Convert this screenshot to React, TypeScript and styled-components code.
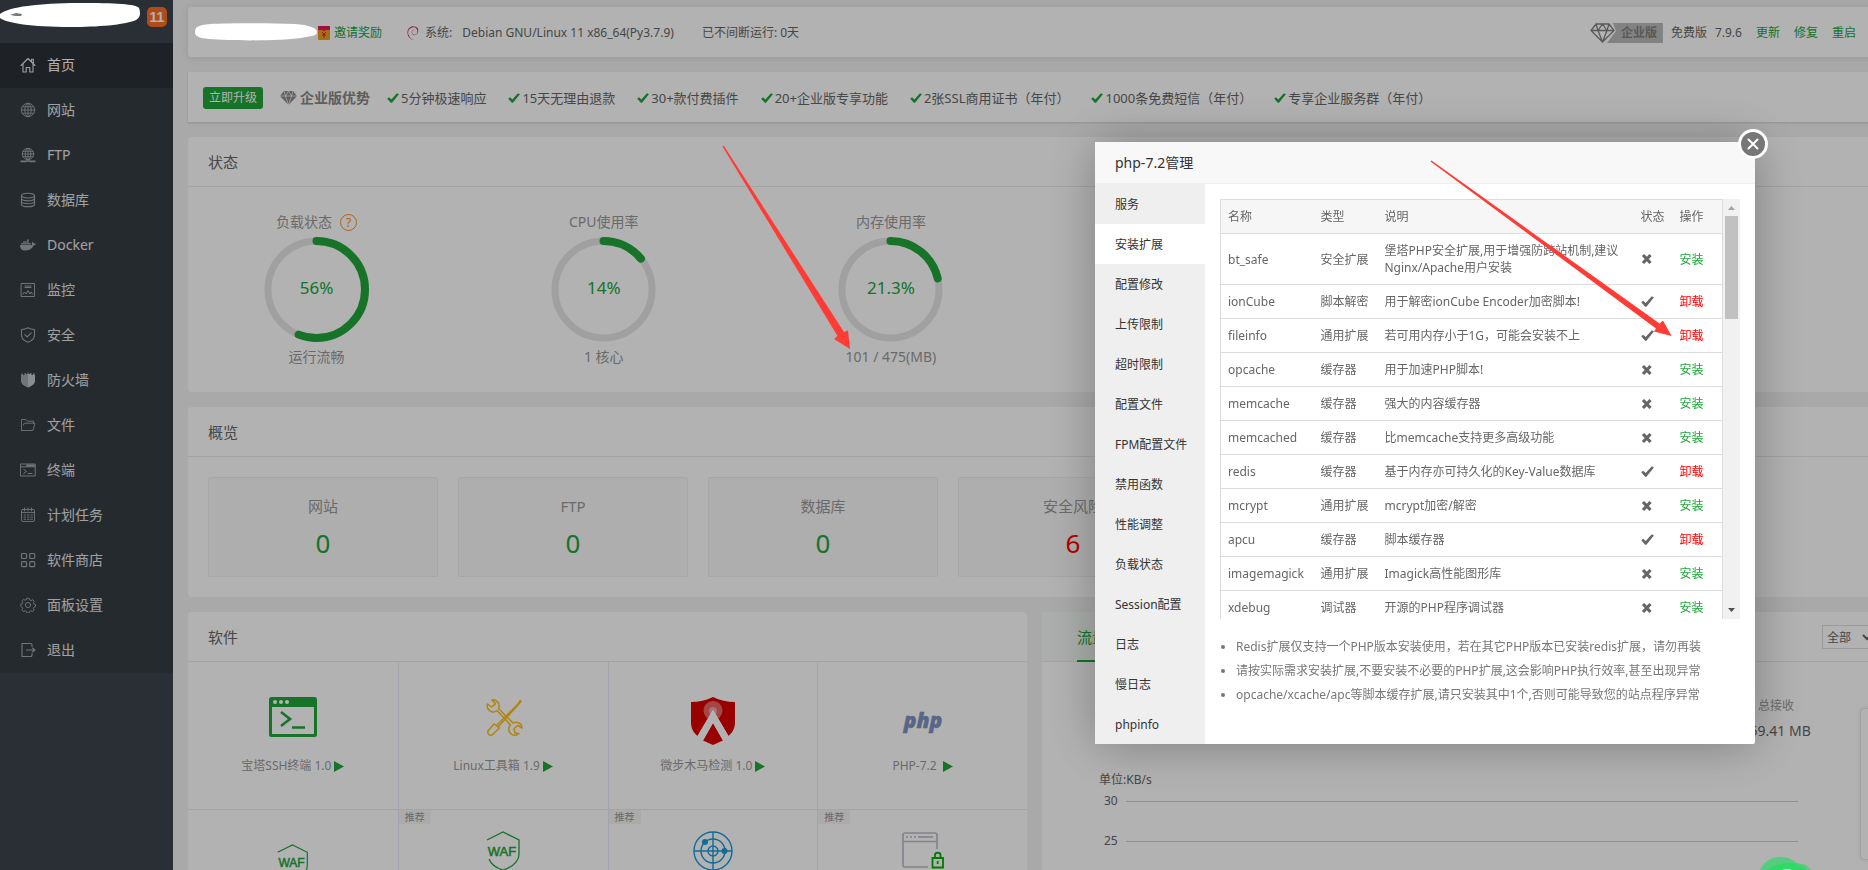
import React from "react";
import styled, { createGlobalStyle } from "styled-components";
import { FaDocker } from "react-icons/fa";
import { SiDebian } from "react-icons/si";

const GlobalStyle = createGlobalStyle`
  *, *::before, *::after { box-sizing: border-box; }
  body {
    margin: 0;
    overflow: hidden;
    background: #f2f2f2;
    color: #666;
    font: 12px/18px "Noto Sans", "Noto Sans CJK SC", sans-serif;
  }
  a { color: inherit; text-decoration: none; }
  button { font: inherit; color: inherit; border: 0; background: none; padding: 0; cursor: pointer; }
  ul, h2, h3, p { margin: 0; padding: 0; font-weight: normal; }
  svg { display: block; flex: none; }
`;

const green = "#20a53a";

/* ---------- shell ---------- */

const Shell = styled.div`
  display: flex;
  width: calc(100% + 28px);
  height: 100vh;
  overflow: hidden;
`;

const Sidebar = styled.aside`
  flex: none;
  width: 173px;
  background: #3c444d;
`;

const SidebarTop = styled.div`
  display: flex;
  justify-content: flex-end;
  height: 43px;
  padding: 7px 6px 0 0;
`;

const MessageBadge = styled.span`
  width: 20px;
  height: 20px;
  border-radius: 5px;
  background: #fc6d26;
  color: #fff;
  font: bold 14px/20px "Liberation Sans", sans-serif;
  text-align: center;
`;

const Menu = styled.ul`
  list-style: none;
  background: #353d44;
`;

const MenuLink = styled.a<{ $active?: boolean }>`
  display: flex;
  align-items: center;
  gap: 11px;
  height: 45px;
  padding: 0 0 2px 20px;
  font-size: 14px;
  color: ${(p) => (p.$active ? "#fff" : "#e6e6e6")};
  background: ${(p) => (p.$active ? "#2c3138" : "transparent")};
  svg { color: ${(p) => (p.$active ? "#e6e6e6" : "#a4a8ac")}; }
`;

const Main = styled.main`
  flex: 1;
  min-width: 0;
  display: flex;
  flex-direction: column;
  gap: 15px;
  padding: 7px 15px 0;
`;

/* ---------- top bars ---------- */

const TopBar = styled.header`
  flex: none;
  display: flex;
  align-items: center;
  height: 50px;
  padding: 2px 25px 0 7px;
  border-radius: 4px;
  background: #fff;
  box-shadow: 0 1px 8px rgba(0, 0, 0, 0.1);
`;

const TopGroup = styled.div<{ $gap: number; $before?: number }>`
  display: flex;
  align-items: center;
  gap: ${(p) => p.$gap}px;
  margin-left: ${(p) => p.$before ?? 0}px;
`;

const TopRight = styled.div`
  display: flex;
  align-items: center;
  gap: 14px;
  margin-left: auto;
`;

const EditionBadge = styled.span`
  display: flex;
  align-items: center;
  color: #808080;
`;

const EditionLabel = styled.span`
  width: 56px;
  height: 20px;
  margin-left: -8px;
  padding-left: 14px;
  clip-path: polygon(6px 0, 100% 0, 100% 100%, 0 100%, 9px 8px);
  background: #bbb;
  color: #808080;
  font-weight: bold;
  line-height: 20px;
`;

const GreenLink = styled.a`
  color: ${green};
`;

const PromoBar = styled.section`
  flex: none;
  display: flex;
  align-items: center;
  gap: 17px;
  height: 50px;
  padding: 1px 0 0 15px;
  background: #fff;
  box-shadow: 0 1px 2px rgba(0, 0, 0, 0.15);
  font-size: 13px;
`;

const UpgradeButton = styled.button`
  width: 60px;
  height: 22px;
  border-radius: 3px;
  background: ${green};
  color: #fff;
  font-size: 12px;
  line-height: 22px;
`;

const PromoTitle = styled.strong`
  display: flex;
  align-items: center;
  gap: 3px;
  font-size: 14px;
  color: #888;
`;

const PromoList = styled.div`
  display: flex;
  gap: 22px;
`;

const PromoItem = styled.span`
  display: flex;
  align-items: center;
  gap: 2px;
  white-space: nowrap;
  svg { color: ${green}; }
`;

/* ---------- cards ---------- */

const Card = styled.section`
  flex: none;
  border-radius: 4px;
  background: #fff;
`;

const CardTitle = styled.h2`
  height: 50px;
  padding-left: 20px;
  border-bottom: 1px solid #ebebeb;
  font-size: 15px;
  line-height: 50px;
`;

const GaugeRow = styled.div`
  display: grid;
  grid-template-columns: repeat(6, 1fr);
  height: 205px;
  margin: 0 -15px;
  padding-top: 25px;
`;

const Gauge = styled.div`
  display: flex;
  flex-direction: column;
  align-items: center;
  color: #999;
  font-size: 14px;
  line-height: 20px;
`;

const GaugeTitle = styled.h3`
  display: flex;
  align-items: center;
  gap: 8px;
  font-size: 14px;
`;

const HelpLink = styled.a`
  width: 17px;
  height: 17px;
  border: 1px solid #ff8c1a;
  border-radius: 50%;
  color: #ff8c1a;
  font-size: 12px;
  line-height: 15px;
  text-align: center;
`;

const GaugeFace = styled.div`
  display: grid;
  place-items: center;
  margin: 5px 0;
  > * { grid-area: 1 / 1; }
  span { padding-bottom: 4px; color: ${green}; font-size: 17px; }
`;

const OverviewRow = styled.div`
  display: flex;
  gap: 20px;
  padding: 20px;
`;

const OverviewBox = styled.div`
  flex: none;
  width: 230px;
  height: 100px;
  padding-top: 17px;
  border: 1px solid #f0f0f0;
  border-radius: 2px;
  background: #fafafa;
  text-align: center;
`;

const OverviewName = styled.p`
  font-size: 15px;
  line-height: 22px;
  color: #999;
`;

const OverviewValue = styled.a<{ $danger?: boolean }>`
  display: block;
  margin-top: 11px;
  font-size: 26px;
  line-height: 30px;
  color: ${(p) => (p.$danger ? "#f00" : green)};
`;

const BottomRow = styled.div`
  display: grid;
  grid-template-columns: 1fr 1fr;
  gap: 15px;
`;

/* ---------- software ---------- */

const SoftGrid = styled.div`
  display: grid;
  grid-template-columns: repeat(4, 1fr);
`;

const SoftCell = styled.div<{ $top: number }>`
  position: relative;
  display: flex;
  flex-direction: column;
  align-items: center;
  gap: 12px;
  height: 148px;
  padding-top: ${(p) => p.$top}px;
  border-bottom: 1px solid #eaeaf5;
  color: #999;
  &:not(:nth-child(4n + 1)) { border-left: 1px solid #eaeaf5; }
`;

const SoftName = styled.a`
  display: flex;
  align-items: center;
  gap: 3px;
  white-space: pre;
`;

const Recommend = styled.span`
  position: absolute;
  top: 0;
  left: 0;
  padding: 0 6px;
  background: #f5f5f5;
  font-size: 10px;
  line-height: 14px;
`;

/* ---------- traffic ---------- */

const TrafficHead = styled.div`
  display: flex;
  justify-content: space-between;
  height: 50px;
  border-bottom: 1px solid #ebebeb;
`;

const TrafficTab = styled.button`
  padding: 0 35px;
  border-radius: 4px 0 0 0;
  background: #f5faf6;
  color: ${green};
  font-size: 15px;
  span {
    display: block;
    height: 50px;
    border-bottom: 2px solid ${green};
    line-height: 50px;
  }
`;

const NetSelect = styled.select`
  width: 54px;
  height: 24px;
  margin: 13px 5px 0 0;
  border: 1px solid #ddd;
  background: #fff;
  color: #666;
  font: 12px "Noto Sans", "Noto Sans CJK SC", sans-serif;
`;

const TrafficStats = styled.div`
  display: grid;
  grid-template-columns: repeat(4, 1fr);
  padding-top: 35px;
  text-align: center;
`;

const Stat = styled.div`
  grid-column: 4;
  color: #999;
`;

const StatValue = styled.p`
  margin-top: 6px;
  font-size: 14px;
  line-height: 20px;
  color: #666;
`;

const Chart = styled.div`
  padding: 30px 83px 0 57px;
`;

const GridLine = styled.div`
  display: flex;
  align-items: center;
  gap: 8px;
  height: 40px;
  padding-left: 5px;
  line-height: 40px;
  &:first-of-type { margin-top: -8px; }
  &::after { content: ""; flex: 1; height: 1px; background: #d0d0d0; }
`;

const SidePanel = styled.div`
  position: fixed;
  top: 708px;
  right: -12px;
  width: 20px;
  height: 152px;
  border: 1px solid #eaeaea;
  border-radius: 4px;
  background: #fff;
  box-shadow: 0 0 4px rgba(0, 0, 0, 0.1);
`;

/* ---------- modal ---------- */

const Shade = styled.div`
  position: fixed;
  inset: 0;
  background: rgba(0, 0, 0, 0.3);
`;

const Modal = styled.div`
  position: fixed;
  top: 142px;
  right: 113px;
  width: 660px;
  border-radius: 2px;
  background: #fff;
  box-shadow: 1px 1px 50px rgba(0, 0, 0, 0.3);
`;

const ModalTitle = styled.h2`
  height: 42px;
  padding-left: 20px;
  border-bottom: 1px solid #eee;
  background: #f8f8f8;
  color: #333;
  font-size: 14px;
  line-height: 41px;
`;

const CloseButton = styled.button`
  position: absolute;
  top: -13px;
  right: -13px;
  display: grid;
  place-items: center;
  width: 30px;
  height: 30px;
  border: 3px solid #fff;
  border-radius: 50%;
  background: #777;
  color: #fff;
`;

const ModalBody = styled.div`
  display: flex;
`;

const ModalNav = styled.nav`
  flex: none;
  display: flex;
  flex-direction: column;
  width: 110px;
  background: #efefef;
`;

const NavTab = styled.button<{ $active: boolean }>`
  height: 40px;
  padding: 2px 0 0 20px;
  background: ${(p) => (p.$active ? "#fff" : "transparent")};
  color: #333;
  text-align: left;
`;

const ModalContent = styled.div`
  flex: 1;
  padding: 15px;
`;

const ScrollBox = styled.div`
  display: flex;
  height: 420px;
  overflow: hidden;
`;

const ExtTable = styled.table`
  flex: 1;
  align-self: flex-start;
  border: 1px solid #ddd;
  border-collapse: collapse;
  table-layout: fixed;
  line-height: 17px;
  th, td {
    padding: 8px 0 8px 7px;
    border-bottom: 1px solid #ddd;
    font-weight: normal;
    text-align: left;
    white-space: nowrap;
  }
  th { background: #f6f6f6; }
  td:nth-child(3) { padding-right: 8px; white-space: normal; }
`;

const Action = styled.a<{ $installed: boolean }>`
  color: ${(p) => (p.$installed ? "#f00" : green)};
`;

const ScrollTrack = styled.div`
  display: flex;
  flex-direction: column;
  align-items: center;
  justify-content: space-between;
  width: 17px;
  padding: 6px 0;
  background: #f1f1f1;
`;

const ScrollThumb = styled.div`
  width: 13px;
  height: 103px;
  margin: 5px 0 auto;
  background: #c1c1c1;
`;

const Notes = styled.ul`
  margin-top: 16px;
  padding-left: 16px;
  color: #777;
  line-height: 24px;
  white-space: nowrap;
`;

const Floating = styled.svg`
  position: fixed;
  right: 56px;
  bottom: 0;
`;

const Annotation = styled.svg`
  position: fixed;
  top: 0;
  left: 0;
  pointer-events: none;
`;

/* ---------- icons ---------- */

const Line = ({ children, w = 1.1 }: { children: React.ReactNode; w?: number }) => (
  <svg width="16" height="16" viewBox="0 0 16 16" fill="none" stroke="currentColor" strokeWidth={w} strokeLinejoin="round" strokeLinecap="round">
    {children}
  </svg>
);

const icons = {
  home: <Line><path d="M1 8.5 8 1.5l7 7M3 7v8h3.2v-4.5h3.6V15H13V7M11.5 4.5V2.3h1.8v4" /></Line>,
  globe: <Line w={0.9}><circle cx="8" cy="8" r="6.7" /><ellipse cx="8" cy="8" rx="3.2" ry="6.7" /><path d="M8 1.3v13.4M1.3 8h13.4M2.2 4.8h11.6M2.2 11.2h11.6" /></Line>,
  ftp: <Line w={0.9}><circle cx="8" cy="7" r="5.7" /><ellipse cx="8" cy="7" rx="2.8" ry="5.7" /><path d="M8 1.3v11.4M2.3 7h11.4M3 4.3h10M3 9.7h10" /><path strokeWidth="1.6" d="M1 14.4h5M10 14.4h5M6.5 14h3" /></Line>,
  database: <Line><ellipse cx="8" cy="3.6" rx="6.5" ry="2.4" /><path d="M1.5 3.6v8.8c0 3 13 3 13 0V3.6M1.5 6.6c0 3 13 3 13 0M1.5 9.5c0 3 13 3 13 0" /></Line>,
  docker: <FaDocker size={16} />,
  monitor: <Line w={1}><path d="M1.5 1.5h13v13h-13zM5 4h6M5 5.5h6M3 12l1.5-2 1.5 2 2-3.5L10 12l1.2-2 1.3 2" /></Line>,
  shield: <Line><path d="M8 .8c2 1.3 4 1.7 6.5 1.7V8c0 3.500-3 6-6.500 7.300C4.500 14 1.500 11.500 1.500 8V2.500C4 2.500 6 2.100 8 .8zM4.800 7.600l2.400 2.300 4-4" /></Line>,
  wall: (
    <svg width="16" height="16" viewBox="0 0 16 16">
      <path fill="currentColor" d="M1.500 3V1.500H3V3h1.500V1.200H6V2h1.500V.5H8V15.500C4 14 1 12 1 9V3z" />
      <path fill="#c6c9cc" d="M14.500 3V1.500H13V3h-1.500V1.200H10V2H8.500V.5H8V15.500C12 14 15 12 15 9V3z" />
    </svg>
  ),
  folder: <Line w={0.9}><path d="M1.500 13.500v-11h4.500l1.500 1.700h6v2M1.500 13.500h11.500L15 6.200H4.200L3.500 8" /></Line>,
  terminal: <Line w={1}><path d="M.8 2h14.400v12H.8zM.8 4.800h14.400M3.800 7.500l2.700 2-2.700 2M8 11.500h4" /><path strokeWidth="2" d="M7 3.400h7" /></Line>,
  calendar: <Line w={0.9}><rect x="1.500" y="2.500" width="13" height="12" rx="1.500" /><path d="M1.500 5.500h13M4.500 1v3M11.500 1v3M8 1v3" /><path strokeDasharray="1.700 1.700" d="M4 8h8.500M4 10.200h8.500M4 12.300h8.500" /></Line>,
  apps: <Line w={1.2}><rect x="1.500" y="1.500" width="5" height="5" rx="1" /><rect x="9.700" y="1.500" width="5" height="5" rx="1" /><rect x="1.500" y="9.700" width="5" height="5" rx="1" /><rect x="9.700" y="9.700" width="5" height="5" rx="1" /></Line>,
  gear: <Line w={0.9}><circle cx="8" cy="8" r="2.600" /><path d="m6.800 1.300 2.400 0 .5 1.700 1.500.6 1.500-.9 1.600 1.600-.9 1.500.5 1.300 1.600.4v2.200l-1.600.5-.6 1.400.8 1.500-1.600 1.500-1.500-.8-1.400.6-.5 1.500H6.800l-.5-1.500-1.400-.6-1.500.8-1.500-1.500.8-1.500-.6-1.400L.8 9.300V7.100l1.500-.4.5-1.300-.9-1.500 1.600-1.600 1.500.9 1.400-.6z" /></Line>,
  exit: <Line><path d="M12 4.500V2.800c0-.7-.5-1.300-1.300-1.300H2V14.500h8.700c.8 0 1.300-.6 1.300-1.300v-1.700M6.500 8H15M12.500 6 15 8l-2.500 2" /></Line>,
};

const Tick = ({ size = 12 }: { size?: number }) => (
  <svg width={size} height={size} viewBox="0 0 12 12">
    <path fill="currentColor" d="M.2 6.800 2 5.200l2.300 2.200L10 1.200l1.900 1L5 10.800H3.800z" />
  </svg>
);

const Cross = () => (
  <svg width="12" height="12" viewBox="0 0 12 12">
    <path stroke="currentColor" strokeWidth="3.200" d="m2 2 7.500 8M9.500 2 2 10" />
  </svg>
);

const Play = () => (
  <svg width="10" height="11" viewBox="0 0 10 11"><path fill={green} d="M0 0l10 5.500L0 11z" /></svg>
);

const WafIcon = ({ size }: { size: number }) => (
  <svg width={size} height={size} viewBox="0 0 40 40" fill="none" stroke={green} strokeWidth="1.300">
    <path d="M4 9 20 1l16 8v14c0 8-7 13-16 16-7-2-12-6-14-11" />
    <text x="19" y="25" fill={green} strokeWidth="0.500" fontFamily="Liberation Sans, sans-serif" fontSize="13" textAnchor="middle">WAF</text>
  </svg>
);

const TerminalApp = () => (
  <svg width="48" height="48" viewBox="0 0 48 48">
    <rect x="1.500" y="1.500" width="45" height="37" rx="1" fill="none" stroke={green} strokeWidth="3" />
    <path fill={green} d="M1 1h46v9H1z" />
    <g fill="#fff"><circle cx="6" cy="5" r="2" /><circle cx="12" cy="5" r="2" /><circle cx="18" cy="5" r="2" /></g>
    <path d="m12 15 9 7-9 7M23 30.500h13" fill="none" stroke={green} strokeWidth="2.600" />
  </svg>
);

const ToolsApp = () => (
  <svg width="48" height="48" viewBox="0 0 48 48" fill="none" stroke="#fcbf18" strokeWidth="1.500" strokeLinejoin="round">
    <path d="M13 3a6 6 0 0 1 6.500 8.500L34 26a6 6 0 0 1 9 5l-4-2.500-4 3 1 4.500 4 .5a6 6 0 0 1-8.500-8.500L18 13.500A6 6 0 0 1 8.500 7l4 3 4-3.200z" />
    <path d="M17.500 28.500 39 7l2-3.500 1 .7-2.700 3.600L19.500 29.500M15 27l5.500 4-7.500 7c-2 1-5-1-4-4z" />
  </svg>
);

const ShieldApp = () => (
  <svg width="48" height="48" viewBox="0 0 48 48">
    <path fill="#dc0000" d="M2 5c8 0 15-1.500 22-5 7 3.500 14 5 22 5v20c0 6-2 10-6.500 14L24 12.500 8.500 39C4 35 2 31 2 25z" />
    <path fill="#dc0000" d="m24 26 10 17.500L24 48l-10-4.500z" />
    <circle cx="24" cy="13.500" r="9.500" fill="#fff" fillOpacity="0.4" />
    <circle cx="24" cy="14" r="4" fill="#fff" fillOpacity="0.4" />
    <path fill="#fff" d="m24 13 15.500 26-5.500 4.500L24 26 14 43.500 8.500 39z" />
  </svg>
);

const PhpApp = () => (
  <svg width="48" height="48" viewBox="0 0 48 48">
    <text x="24" y="31" fill="#7c94cc" stroke="#8d8d9a" strokeWidth="0.400" fontFamily="Open Sans, sans-serif" fontWeight="800" fontStyle="italic" fontSize="21" textAnchor="middle">php</text>
  </svg>
);

const RadarApp = () => (
  <svg width="40" height="40" viewBox="0 0 40 40" fill="none" stroke="#189adb" strokeWidth="1.400">
    <circle cx="20" cy="20" r="19" /><circle cx="20" cy="20" r="12" /><circle cx="20" cy="20" r="5" />
    <path d="M20 1v38M1 20h38" />
    <g fill="#189adb" stroke="none"><circle cx="12" cy="11" r="3" /><circle cx="31.500" cy="20" r="3" /></g>
  </svg>
);

const LockedSiteApp = () => (
  <svg width="42" height="40" viewBox="0 0 42 40" fill="none" stroke="#bcb9c8" strokeWidth="1.600">
    <path d="M35 18V4c0-1.500-1-2-2-2H3C2 2 1 2.500 1 4v30c0 1 .5 2 2 2h23M1 10.500h34" />
    <path strokeDasharray="2 2" d="M4 6h11" /><path d="M16 6h15" />
    <path stroke="#00b400" strokeWidth="1.800" d="M30.500 27h10.500v9.500H30.500zM33 27v-3c0-3 5.500-3 5.500 0v3M35.700 30v3" />
  </svg>
);

/* ---------- data ---------- */

const menu: [keyof typeof icons, string][] = [
  ["home", "首页"], ["globe", "网站"], ["ftp", "FTP"], ["database", "数据库"], ["docker", "Docker"],
  ["monitor", "监控"], ["shield", "安全"], ["wall", "防火墙"], ["folder", "文件"], ["terminal", "终端"],
  ["calendar", "计划任务"], ["apps", "软件商店"], ["gear", "面板设置"], ["exit", "退出"],
];

const promos = [
  "5分钟极速响应", "15天无理由退款", "30+款付费插件", "20+企业版专享功能",
  "2张SSL商用证书（年付）", "1000条免费短信（年付）", "专享企业服务群（年付）",
];

const gauges = [
  { title: "负载状态", value: 56, note: "运行流畅", help: true },
  { title: "CPU使用率", value: 14, note: "1 核心" },
  { title: "内存使用率", value: 21.3, note: "101 / 475(MB)" },
];

const overview: [string, number][] = [["网站", 0], ["FTP", 0], ["数据库", 0], ["安全风险", 6]];

const software = [
  { name: "宝塔SSH终端 1.0", icon: <TerminalApp /> },
  { name: "Linux工具箱 1.9", icon: <ToolsApp /> },
  { name: "微步木马检测 1.0", icon: <ShieldApp /> },
  { name: "PHP-7.2 ", icon: <PhpApp /> },
];

const recommended = [<WafIcon size={40} />, <RadarApp />, <LockedSiteApp />];

const tabs = [
  "服务", "安装扩展", "配置修改", "上传限制", "超时限制", "配置文件", "FPM配置文件",
  "禁用函数", "性能调整", "负载状态", "Session配置", "日志", "慢日志", "phpinfo",
];

const extensions: [string, string, string, boolean][] = [
  ["bt_safe", "安全扩展", "堡塔PHP安全扩展,用于增强防跨站机制,建议Nginx/Apache用户安装", false],
  ["ionCube", "脚本解密", "用于解密ionCube Encoder加密脚本!", true],
  ["fileinfo", "通用扩展", "若可用内存小于1G，可能会安装不上", true],
  ["opcache", "缓存器", "用于加速PHP脚本!", false],
  ["memcache", "缓存器", "强大的内容缓存器", false],
  ["memcached", "缓存器", "比memcache支持更多高级功能", false],
  ["redis", "缓存器", "基于内存亦可持久化的Key-Value数据库", true],
  ["mcrypt", "通用扩展", "mcrypt加密/解密", false],
  ["apcu", "缓存器", "脚本缓存器", true],
  ["imagemagick", "通用扩展", "Imagick高性能图形库", false],
  ["xdebug", "调试器", "开源的PHP程序调试器", false],
];

const notes = [
  "Redis扩展仅支持一个PHP版本安装使用，若在其它PHP版本已安装redis扩展，请勿再装",
  "请按实际需求安装扩展,不要安装不必要的PHP扩展,这会影响PHP执行效率,甚至出现异常",
  "opcache/xcache/apc等脚本缓存扩展,请只安装其中1个,否则可能导致您的站点程序异常",
];

const Ring = ({ value }: { value: number }) => (
  <svg width="105" height="105" viewBox="0 0 105 105" fill="none">
    <circle cx="52.500" cy="52.500" r="48.500" stroke="#e6e6e6" strokeWidth="7" />
    <circle cx="52.500" cy="52.500" r="48.500" stroke={green} strokeWidth="8" strokeLinecap="round"
      pathLength="100" strokeDasharray={`${value} 100`} transform="rotate(-90 52.500 52.500)" />
  </svg>
);

export default function App() {
  return (
    <>
      <GlobalStyle />
      <Shell>
        <Sidebar>
          <SidebarTop>
            <MessageBadge>11</MessageBadge>
          </SidebarTop>
          <Menu>
            {menu.map(([icon, label], i) => (
              <li key={label}><MenuLink href="#" $active={i === 0}>{icons[icon]}{label}</MenuLink></li>
            ))}
          </Menu>
        </Sidebar>

        <Main>
          <TopBar>
            <TopGroup $gap={4} $before={123}>
              <svg width="12" height="14" viewBox="0 0 12 14">
                <rect width="12" height="14" rx="1" fill="#eea01c" />
                <path fill="#e5175c" d="M0 0h12v4H8L6 5 4 4H0z" />
                <path stroke="#d8203c" d="m4 6 2 2 2-2M6 8v4M4 9h4" fill="none" />
              </svg>
              <GreenLink href="#">邀请奖励</GreenLink>
            </TopGroup>
            <TopGroup $gap={5} $before={24}>
              <SiDebian size={14} color="#cf3d60" />
              <span>系统:</span>
            </TopGroup>
            <TopGroup $gap={28} $before={10}>
              <span>Debian GNU/Linux 11 x86_64(Py3.7.9)</span>
              <span>已不间断运行: 0天</span>
            </TopGroup>
            <TopRight>
              <TopGroup $gap={8}>
                <EditionBadge>
                  <svg width="25" height="20" viewBox="0 0 25 20" fill="none" stroke="currentColor" strokeWidth="1.300">
                    <path d="M6 1h13l5 6.500L12.500 19 1 7.500zM1 7.500h23M6 1l2 6.500L12.500 19 17 7.500 19 1M8 7.500 12.500 1 17 7.500" />
                  </svg>
                  <EditionLabel>企业版</EditionLabel>
                </EditionBadge>
                <span>免费版</span>
                <span>7.9.6</span>
              </TopGroup>
              <GreenLink href="#">更新</GreenLink>
              <GreenLink href="#">修复</GreenLink>
              <GreenLink href="#">重启</GreenLink>
            </TopRight>
          </TopBar>

          <PromoBar>
            <UpgradeButton>立即升级</UpgradeButton>
            <PromoTitle>
              <svg width="17" height="14" viewBox="0 0 17 14">
                <path fill="currentColor" d="M4 0h9l4 5-8.500 9L0 5z" />
                <path stroke="#fff" strokeWidth="0.700" fill="none" d="M0 5h17M4 0l1.500 5 3 9 3-9L13 0M5.500 5l3-5 3 5" />
              </svg>
              企业版优势
            </PromoTitle>
            <PromoList>
              {promos.map((text) => <PromoItem key={text}><Tick />{text}</PromoItem>)}
            </PromoList>
          </PromoBar>

          <Card>
            <CardTitle>状态</CardTitle>
            <GaugeRow>
              {gauges.map((g) => (
                <Gauge key={g.title}>
                  <GaugeTitle>
                    {g.title}
                    {g.help && <HelpLink href="#">?</HelpLink>}
                  </GaugeTitle>
                  <GaugeFace><Ring value={g.value} /><span>{g.value}%</span></GaugeFace>
                  <p>{g.note}</p>
                </Gauge>
              ))}
            </GaugeRow>
          </Card>

          <Card>
            <CardTitle>概览</CardTitle>
            <OverviewRow>
              {overview.map(([name, value]) => (
                <OverviewBox key={name}>
                  <OverviewName>{name}</OverviewName>
                  <OverviewValue href="#" $danger={value > 0}>{value}</OverviewValue>
                </OverviewBox>
              ))}
            </OverviewRow>
          </Card>

          <BottomRow>
            <Card>
              <CardTitle>软件</CardTitle>
              <SoftGrid>
                {software.map((s) => (
                  <SoftCell key={s.name} $top={35}>
                    {s.icon}
                    <SoftName href="#">{s.name}<Play /></SoftName>
                  </SoftCell>
                ))}
                <SoftCell $top={34}><WafIcon size={37} /></SoftCell>
                {recommended.map((icon, i) => (
                  <SoftCell key={i} $top={21}><Recommend>推荐</Recommend>{icon}</SoftCell>
                ))}
              </SoftGrid>
            </Card>
            <Card>
              <TrafficHead>
                <TrafficTab><span>流量</span></TrafficTab>
                <NetSelect aria-label="网卡"><option>全部</option></NetSelect>
              </TrafficHead>
              <TrafficStats>
                <Stat>总接收<StatValue>359.41 MB</StatValue></Stat>
              </TrafficStats>
              <Chart>
                <p>单位:KB/s</p>
                <GridLine>30</GridLine>
                <GridLine>25</GridLine>
              </Chart>
            </Card>
          </BottomRow>
        </Main>
      </Shell>

      <SidePanel />
      <Shade />

      <Modal role="dialog" aria-labelledby="php-title">
        <ModalTitle id="php-title">php-7.2管理</ModalTitle>
        <CloseButton aria-label="关闭">
          <svg width="12" height="12" viewBox="0 0 12 12"><path stroke="currentColor" strokeWidth="2" strokeLinecap="round" d="m1.500 1.500 9 9M10.500 1.500l-9 9" /></svg>
        </CloseButton>
        <ModalBody>
          <ModalNav>
            {tabs.map((t) => <NavTab key={t} $active={t === "安装扩展"}>{t}</NavTab>)}
          </ModalNav>
          <ModalContent>
            <ScrollBox>
              <ExtTable>
                <colgroup>
                  <col width="93" /><col width="64" /><col /><col width="39" /><col width="50" />
                </colgroup>
                <thead>
                  <tr><th>名称</th><th>类型</th><th>说明</th><th>状态</th><th>操作</th></tr>
                </thead>
                <tbody>
                  {extensions.map(([name, type, text, installed]) => (
                    <tr key={name}>
                      <td>{name}</td>
                      <td>{type}</td>
                      <td>{text}</td>
                      <td>{installed ? <Tick size={13} /> : <Cross />}</td>
                      <td><Action href="#" $installed={installed}>{installed ? "卸载" : "安装"}</Action></td>
                    </tr>
                  ))}
                </tbody>
              </ExtTable>
              <ScrollTrack>
                <svg width="7" height="6" viewBox="0 0 7 6"><path fill="#a3a3a3" d="M0 5h7L3.500 1z" /></svg>
                <ScrollThumb />
                <svg width="7" height="6" viewBox="0 0 7 6"><path fill="#505050" d="M0 1h7L3.500 5z" /></svg>
              </ScrollTrack>
            </ScrollBox>
            <Notes>{notes.map((n) => <li key={n}>{n}</li>)}</Notes>
          </ModalContent>
        </ModalBody>
      </Modal>

      <Floating width="52" height="13" viewBox="0 0 52 13">
        <path fill="#56cc80" d="M0 13C4 4 12 0 20 0c9 0 13 3 17 6l9 2 5 5z" />
        <path fill="#2fd966" d="M8 13c5-5 13-7 21-7s13 3 17 7z" />
        <path fill="#fff" d="M22 13c3-1 7-1 10 0z" />
      </Floating>

      <Annotation width="1700" height="400" viewBox="0 0 1700 400">
        <path fill="#fff" d="M0 14C8 7 40 3 78 3s58 1 61 5c2 5 1 10-3 12-12 5-38 7-66 7C32 27 6 23 0 18z" />
        <path fill="#777" d="m10 15 6-2 6 1-1 2h-5z" />
        <path fill="#fff" d="M195 32c0-6 5-7 15-8 22-1 60-1 85 0 14 1 22 4 22 8s-6 4-16 6c-24 3-68 3-92 1-9-1-14-2-14-7z" />
        <path fill="#ff3b36" d="M722.500 146.500 723.800 145.800 844 332l4-1.500 2 18.500-16-10 3.500-3z" />
        <path fill="#ff3b36" d="M1430.500 161.500 1431.500 160.500 1659.500 323.500l3.500-3 8.500 15.500-17.500-4.500 2-3z" />
      </Annotation>
    </>
  );
}
